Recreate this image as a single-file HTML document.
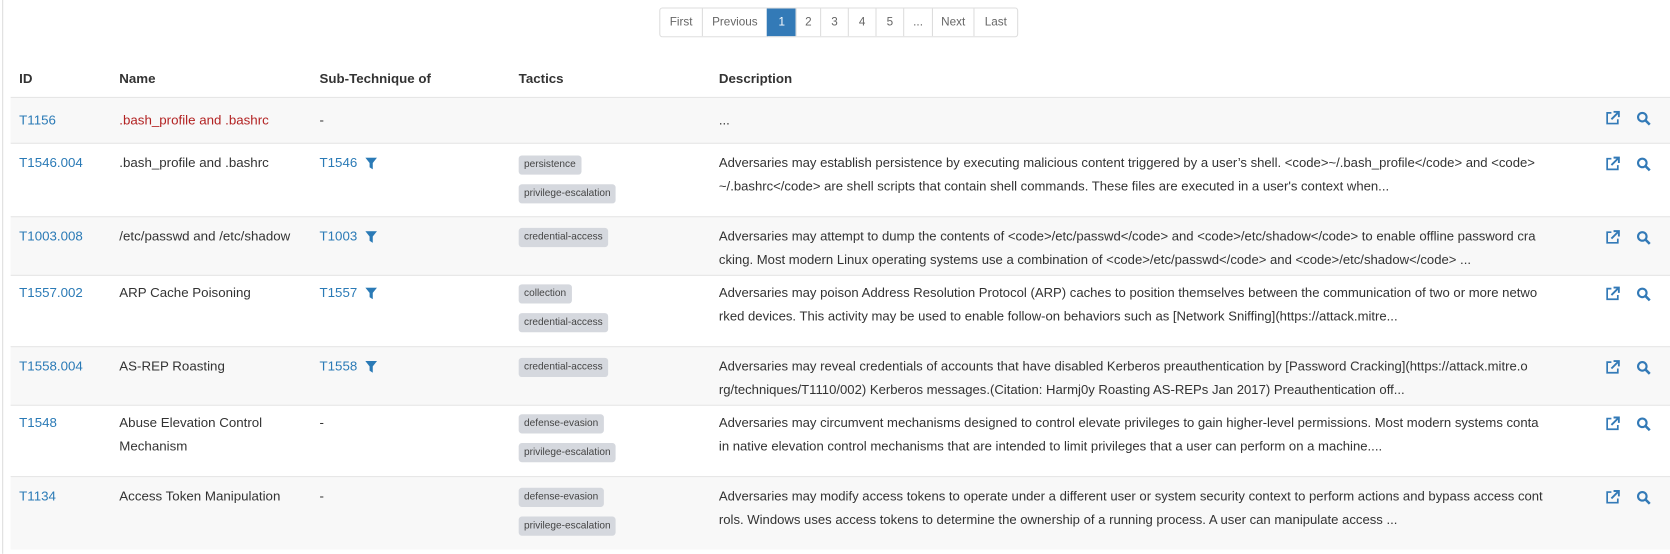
<!DOCTYPE html><html><head><style>
body{margin:0;width:1670px;height:548px;background:#fff;overflow:hidden}
#w{position:absolute;left:0;top:0;width:1568px;height:515px;transform:scale(1.06505);transform-origin:0 0;font-family:"Liberation Sans",sans-serif;font-size:12.5px;color:#333}
.lb{position:absolute;left:2px;top:0;width:1px;height:520px;background:#ddd}
.pg{position:absolute;top:7px;height:26px;display:flex;left:619px;border:1px solid #ddd;border-radius:3px;overflow:hidden}
.pg span{display:flex;align-items:center;justify-content:center;border-left:1px solid #ddd;font-size:11px;color:#666;background:#fff}
.pg span:first-child{border-left:none}
.pg .a{background:#337ab7;color:#fff;border-color:#337ab7}
.h{position:absolute;top:67px;font-weight:bold;font-size:12.5px;color:#333}
.r{position:absolute;left:10px;width:1560px;border-top:1px solid #e6e6e6}
.g{background:#f8f8f8}
.c{position:absolute;top:13px;line-height:22px;white-space:nowrap}
a{color:#2a7ab6;text-decoration:none}
.b{position:absolute;left:477px;height:18px;line-height:18px;padding:0 5px;background:#d5d8de;border-radius:3px;font-size:9.5px;color:#444;white-space:nowrap}
.d{position:absolute;left:665px;top:10px;line-height:22px;font-size:12.3px;white-space:nowrap}
.ic{position:absolute;left:1497px;top:14px}
.ic2{position:absolute;left:1526px;top:14px}
.f{position:absolute;left:333px;top:19px}
</style></head><body><div id="w">
<div class="lb"></div>
<div class="pg"><span style="width:39px">First</span><span style="width:60px">Previous</span><span class="a" style="width:26px">1</span><span style="width:22px">2</span><span style="width:25px">3</span><span style="width:25px">4</span><span style="width:25px">5</span><span style="width:26px">...</span><span style="width:38px">Next</span><span style="width:40px">Last</span></div>
<div class="h" style="left:18px">ID</div><div class="h" style="left:112px">Name</div><div class="h" style="left:300px">Sub-Technique of</div><div class="h" style="left:487px">Tactics</div><div class="h" style="left:675px">Description</div>

<div class="r g" style="top:91px;height:43px"><div class="c" style="left:8px;top:10px"><a>T1156</a></div><div class="c" style="left:102px;top:10px;color:#b22222">.bash_profile and .bashrc</div><div class="c" style="left:290px;top:10px">-</div><div class="d" style="top:10px">...</div>
<svg class="ic" style="top:12px" width="14" height="14" viewBox="0 0 14 14"><path d="M6 2H2v10h10V8" fill="none" stroke="#337ab7" stroke-width="1.6"/><path d="M8 1h5v5M13 1L6 8" fill="none" stroke="#337ab7" stroke-width="1.8"/></svg><svg class="ic2" style="top:12px" width="14" height="14" viewBox="0 0 14 14"><circle cx="6" cy="6" r="4" fill="none" stroke="#337ab7" stroke-width="2"/><path d="M9 9l4 4" stroke="#337ab7" stroke-width="2.4"/></svg></div>

<div class="r" style="top:134px;height:69px"><div class="c" style="left:8px;top:7px"><a>T1546.004</a></div><div class="c" style="left:102px;top:7px">.bash_profile and .bashrc</div><div class="c" style="left:290px;top:7px"><a>T1546</a></div><svg class="f" style="top:13px" width="11" height="11" viewBox="0 0 11 11"><path d="M0 0h11L7 5v6L4 9V5z" fill="#2a7ab6"/></svg><div class="b" style="top:11px">persistence</div><div class="b" style="top:38px">privilege-escalation</div><div class="d" style="top:7px">Adversaries may establish persistence by executing malicious content triggered by a user’s shell. &lt;code&gt;~/.bash_profile&lt;/code&gt; and &lt;code&gt;<br>~/.bashrc&lt;/code&gt; are shell scripts that contain shell commands. These files are executed in a user's context when...</div>
<svg class="ic" style="top:12px" width="14" height="14" viewBox="0 0 14 14"><path d="M6 2H2v10h10V8" fill="none" stroke="#337ab7" stroke-width="1.6"/><path d="M8 1h5v5M13 1L6 8" fill="none" stroke="#337ab7" stroke-width="1.8"/></svg><svg class="ic2" style="top:12px" width="14" height="14" viewBox="0 0 14 14"><circle cx="6" cy="6" r="4" fill="none" stroke="#337ab7" stroke-width="2"/><path d="M9 9l4 4" stroke="#337ab7" stroke-width="2.4"/></svg></div>

<div class="r g" style="top:203px;height:55px"><div class="c" style="left:8px;top:7px"><a>T1003.008</a></div><div class="c" style="left:102px;top:7px">/etc/passwd and /etc/shadow</div><div class="c" style="left:290px;top:7px"><a>T1003</a></div><svg class="f" style="top:13px" width="11" height="11" viewBox="0 0 11 11"><path d="M0 0h11L7 5v6L4 9V5z" fill="#2a7ab6"/></svg><div class="b" style="top:10px">credential-access</div><div class="d" style="top:7px">Adversaries may attempt to dump the contents of &lt;code&gt;/etc/passwd&lt;/code&gt; and &lt;code&gt;/etc/shadow&lt;/code&gt; to enable offline password cra<br>cking. Most modern Linux operating systems use a combination of &lt;code&gt;/etc/passwd&lt;/code&gt; and &lt;code&gt;/etc/shadow&lt;/code&gt; ...</div>
<svg class="ic" style="top:12px" width="14" height="14" viewBox="0 0 14 14"><path d="M6 2H2v10h10V8" fill="none" stroke="#337ab7" stroke-width="1.6"/><path d="M8 1h5v5M13 1L6 8" fill="none" stroke="#337ab7" stroke-width="1.8"/></svg><svg class="ic2" style="top:12px" width="14" height="14" viewBox="0 0 14 14"><circle cx="6" cy="6" r="4" fill="none" stroke="#337ab7" stroke-width="2"/><path d="M9 9l4 4" stroke="#337ab7" stroke-width="2.4"/></svg></div>

<div class="r" style="top:258px;height:67px"><div class="c" style="left:8px;top:5px"><a>T1557.002</a></div><div class="c" style="left:102px;top:5px">ARP Cache Poisoning</div><div class="c" style="left:290px;top:5px"><a>T1557</a></div><svg class="f" style="top:11px" width="11" height="11" viewBox="0 0 11 11"><path d="M0 0h11L7 5v6L4 9V5z" fill="#2a7ab6"/></svg><div class="b" style="top:8px">collection</div><div class="b" style="top:35px">credential-access</div><div class="d" style="top:5px">Adversaries may poison Address Resolution Protocol (ARP) caches to position themselves between the communication of two or more netwo<br>rked devices. This activity may be used to enable follow-on behaviors such as [Network Sniffing](https://attack.mitre...</div>
<svg class="ic" style="top:10px" width="14" height="14" viewBox="0 0 14 14"><path d="M6 2H2v10h10V8" fill="none" stroke="#337ab7" stroke-width="1.6"/><path d="M8 1h5v5M13 1L6 8" fill="none" stroke="#337ab7" stroke-width="1.8"/></svg><svg class="ic2" style="top:10px" width="14" height="14" viewBox="0 0 14 14"><circle cx="6" cy="6" r="4" fill="none" stroke="#337ab7" stroke-width="2"/><path d="M9 9l4 4" stroke="#337ab7" stroke-width="2.4"/></svg></div>

<div class="r g" style="top:325px;height:55px"><div class="c" style="left:8px;top:7px"><a>T1558.004</a></div><div class="c" style="left:102px;top:7px">AS-REP Roasting</div><div class="c" style="left:290px;top:7px"><a>T1558</a></div><svg class="f" style="top:13px" width="11" height="11" viewBox="0 0 11 11"><path d="M0 0h11L7 5v6L4 9V5z" fill="#2a7ab6"/></svg><div class="b" style="top:10px">credential-access</div><div class="d" style="top:7px">Adversaries may reveal credentials of accounts that have disabled Kerberos preauthentication by [Password Cracking](https://attack.mitre.o<br>rg/techniques/T1110/002) Kerberos messages.(Citation: Harmj0y Roasting AS-REPs Jan 2017) Preauthentication off...</div>
<svg class="ic" style="top:12px" width="14" height="14" viewBox="0 0 14 14"><path d="M6 2H2v10h10V8" fill="none" stroke="#337ab7" stroke-width="1.6"/><path d="M8 1h5v5M13 1L6 8" fill="none" stroke="#337ab7" stroke-width="1.8"/></svg><svg class="ic2" style="top:12px" width="14" height="14" viewBox="0 0 14 14"><circle cx="6" cy="6" r="4" fill="none" stroke="#337ab7" stroke-width="2"/><path d="M9 9l4 4" stroke="#337ab7" stroke-width="2.4"/></svg></div>

<div class="r" style="top:380px;height:67px"><div class="c" style="left:8px;top:5px"><a>T1548</a></div><div class="c" style="left:102px;top:5px">Abuse Elevation Control<br>Mechanism</div><div class="c" style="left:290px;top:5px">-</div><div class="b" style="top:8px">defense-evasion</div><div class="b" style="top:35px">privilege-escalation</div><div class="d" style="top:5px">Adversaries may circumvent mechanisms designed to control elevate privileges to gain higher-level permissions. Most modern systems conta<br>in native elevation control mechanisms that are intended to limit privileges that a user can perform on a machine....</div>
<svg class="ic" style="top:10px" width="14" height="14" viewBox="0 0 14 14"><path d="M6 2H2v10h10V8" fill="none" stroke="#337ab7" stroke-width="1.6"/><path d="M8 1h5v5M13 1L6 8" fill="none" stroke="#337ab7" stroke-width="1.8"/></svg><svg class="ic2" style="top:10px" width="14" height="14" viewBox="0 0 14 14"><circle cx="6" cy="6" r="4" fill="none" stroke="#337ab7" stroke-width="2"/><path d="M9 9l4 4" stroke="#337ab7" stroke-width="2.4"/></svg></div>

<div class="r g" style="top:447px;height:68px"><div class="c" style="left:8px;top:7px"><a>T1134</a></div><div class="c" style="left:102px;top:7px">Access Token Manipulation</div><div class="c" style="left:290px;top:7px">-</div><div class="b" style="top:10px">defense-evasion</div><div class="b" style="top:37px">privilege-escalation</div><div class="d" style="top:7px">Adversaries may modify access tokens to operate under a different user or system security context to perform actions and bypass access cont<br>rols. Windows uses access tokens to determine the ownership of a running process. A user can manipulate access ...</div>
<svg class="ic" style="top:12px" width="14" height="14" viewBox="0 0 14 14"><path d="M6 2H2v10h10V8" fill="none" stroke="#337ab7" stroke-width="1.6"/><path d="M8 1h5v5M13 1L6 8" fill="none" stroke="#337ab7" stroke-width="1.8"/></svg><svg class="ic2" style="top:12px" width="14" height="14" viewBox="0 0 14 14"><circle cx="6" cy="6" r="4" fill="none" stroke="#337ab7" stroke-width="2"/><path d="M9 9l4 4" stroke="#337ab7" stroke-width="2.4"/></svg></div>
</div></body></html>
